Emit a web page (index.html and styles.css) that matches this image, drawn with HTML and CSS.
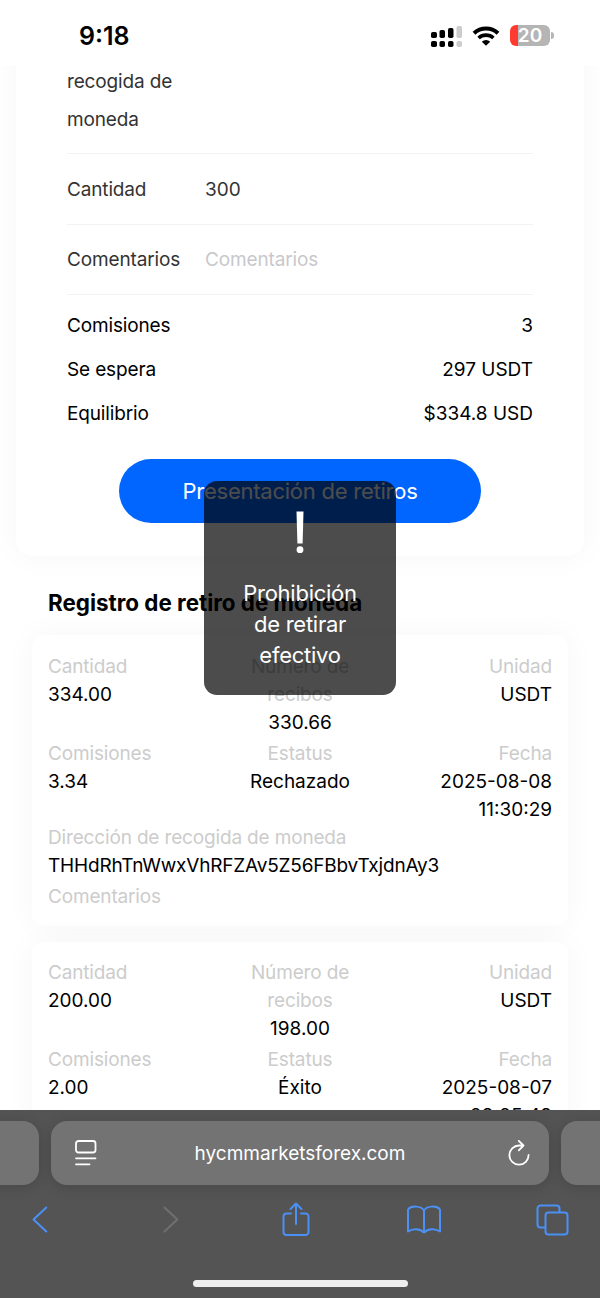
FILE: index.html
```html
<!DOCTYPE html>
<html lang="es">
<head>
    <meta charset="UTF-8">
    <meta name="viewport" content="width=device-width, initial-scale=1.0">
    <title>Registro de retiro de moneda</title>
    <link rel="stylesheet" href="styles.css">
</head>
<body>
    <div class="screen">
        <header class="status-bar">
            <span class="time">9:18</span>
            <div class="status-icons">
                <svg class="signal" width="32" height="22" viewBox="0 0 32 22">
                    <rect x="0" y="7" width="6" height="6" rx="1.8"/>
                    <rect x="8.5" y="5" width="5.5" height="8" rx="1.8"/>
                    <rect x="17" y="3" width="5.5" height="10" rx="1.8"/>
                    <rect x="25.5" y="1" width="5.5" height="12" rx="1.8" fill="#ccc"/>
                    <rect x="0" y="16" width="6" height="6" rx="1.8"/>
                    <rect x="8.5" y="16" width="5.5" height="6" rx="1.8"/>
                    <rect x="17" y="16" width="5.5" height="6" rx="1.8"/>
                    <rect x="25.5" y="16" width="5.5" height="6" rx="1.8" fill="#ccc"/>
                </svg>
                <svg class="wifi" width="28" height="20" viewBox="0 0 28 20">
                    <path d="M2 7.3A17.5 17.5 0 0 1 26 7.3" fill="none" stroke="#000" stroke-width="4"/>
                    <path d="M6.6 12A11 11 0 0 1 21.4 12" fill="none" stroke="#000" stroke-width="3.6"/>
                    <path d="M14 19.8L9.8 15.7A6 6 0 0 1 18.2 15.7Z"/>
                </svg>
                <div class="battery">
                    <span class="battery-body">20</span>
                    <span class="battery-tip"></span>
                </div>
            </div>
        </header>

        <main class="page">
            <section class="form-card">
                <div class="form-row">
                    <label class="form-label">recogida de moneda</label>
                </div>
                <div class="form-row">
                    <label class="form-label">Cantidad</label>
                    <span class="form-value">300</span>
                </div>
                <div class="form-row">
                    <label class="form-label">Comentarios</label>
                    <span class="form-value placeholder">Comentarios</span>
                </div>
                <div class="summary">
                    <div class="summary-row"><span>Comisiones</span><span>3</span></div>
                    <div class="summary-row"><span>Se espera</span><span>297 USDT</span></div>
                    <div class="summary-row"><span>Equilibrio</span><span>$334.8 USD</span></div>
                </div>
                <button class="submit-btn">Presentación de retiros</button>
            </section>

            <h2 class="record-title">Registro de retiro de moneda</h2>

            <section class="record">
                <div class="record-grid">
                    <div class="cell"><span class="name">Cantidad</span><span>334.00</span></div>
                    <div class="cell center"><span class="name">Número de recibos</span><span>330.66</span></div>
                    <div class="cell right"><span class="name">Unidad</span><span>USDT</span></div>
                    <div class="cell"><span class="name">Comisiones</span><span>3.34</span></div>
                    <div class="cell center"><span class="name">Estatus</span><span>Rechazado</span></div>
                    <div class="cell right"><span class="name">Fecha</span><span>2025-08-08 11:30:29</span></div>
                </div>
                <div class="cell address"><span class="name">Dirección de recogida de moneda</span><span>THHdRhTnWwxVhRFZAv5Z56FBbvTxjdnAy3</span></div>
                <div class="cell note"><span class="name">Comentarios</span></div>
            </section>

            <section class="record">
                <div class="record-grid">
                    <div class="cell"><span class="name">Cantidad</span><span>200.00</span></div>
                    <div class="cell center"><span class="name">Número de recibos</span><span>198.00</span></div>
                    <div class="cell right"><span class="name">Unidad</span><span>USDT</span></div>
                    <div class="cell"><span class="name">Comisiones</span><span>2.00</span></div>
                    <div class="cell center"><span class="name">Estatus</span><span>Éxito</span></div>
                    <div class="cell right"><span class="name">Fecha</span><span>2025-08-07 09:05:49</span></div>
                </div>
            </section>
        </main>

        <footer class="browser-bar">
            <div class="tabs">
                <div class="tab"></div>
                <div class="tab current">
                    <svg width="22" height="26" viewBox="0 0 22 26" fill="none" stroke="#fff" stroke-width="1.8" stroke-linecap="round">
                        <rect x="1" y="1" width="19.5" height="11.5" rx="2.5"/>
                        <path d="M1 18.3h19.5M1 24.3h13.5"/>
                    </svg>
                    <span class="url">hycmmarketsforex.com</span>
                    <svg width="22" height="26" viewBox="0 0 22 26" fill="none" stroke="#fff" stroke-width="1.8" stroke-linecap="round" stroke-linejoin="round">
                        <path d="M15.5 5.5H11A9.6 9.6 0 1 0 20.6 15M10.8 0.9L15.5 5.5L10.8 10.3"/>
                    </svg>
                </div>
                <div class="tab"></div>
            </div>
            <nav class="toolbar">
                <svg width="16" height="27" viewBox="0 0 16 27"><path d="M14.3 1.5L1.5 13.5L14.3 25.5"/></svg>
                <svg class="disabled" width="16" height="27" viewBox="0 0 16 27"><path d="M1.5 1.5L14.3 13.5L1.5 25.5"/></svg>
                <svg width="28" height="36" viewBox="0 0 28 36"><path d="M9 11.5H4.500A3 3 0 0 0 1.500 14.500V30A3 3 0 0 0 4.500 33H23.500A3 3 0 0 0 26.500 30V14.500A3 3 0 0 0 23.500 11.500H19M14 22V2M8.500 7L14 1.500L19.500 7"/></svg>
                <svg width="36" height="29" viewBox="0 0 36 29"><path d="M18 5.5C15.500 1 5.500 0 2 4.500V26.500C7 23 14 23.500 18 27.500C22 23.500 29 23 34 26.500V4.500C30.500 0 20.500 1 18 5.500V27"/></svg>
                <svg width="33" height="32" viewBox="0 0 33 32"><rect x="9.5" y="8.5" width="22" height="22" rx="3"/><path d="M9 23.500H4.500A3 3 0 0 1 1.500 20.500V4.500A3 3 0 0 1 4.500 1.500H20.500A3 3 0 0 1 23.500 4.500V8"/></svg>
            </nav>
            <div class="home-indicator"></div>
        </footer>

        <div class="toast">
            <svg width="12" height="44" viewBox="0 0 12 44" fill="#fff">
                <path d="M2.5 0.5H9.5L8.6 32.5H3.4Z"/>
                <circle cx="6" cy="38.7" r="3.4"/>
            </svg>
            <p>Prohibición de retirar efectivo</p>
        </div>
    </div>
</body>
</html>
```

FILE: styles.css
```css
* {
    margin: 0;
    padding: 0;
    box-sizing: border-box;
}

body {
    font-family: Inter, "Liberation Sans", sans-serif;
    font-size: 19px;
    color: #000;
    background: #fff;
}

.screen {
    position: relative;
    display: flex;
    flex-direction: column;
    width: 600px;
    height: 1298px;
    overflow: hidden;
}

/* status bar */
.status-bar {
    display: flex;
    justify-content: space-between;
    align-items: flex-start;
    flex: none;
    height: 66px;
    padding: 20px 46px 0 79px;
}

.time {
    font-size: 25px;
    font-weight: 600;
    line-height: 32px;
}

.status-icons {
    display: flex;
    align-items: center;
    height: 31px;
}

.wifi {
    margin: 0 10px 0 9px;
}

.battery {
    display: flex;
    align-items: center;
    gap: 1px;
}

.battery-body {
    width: 40px;
    height: 21px;
    border-radius: 6px;
    background: linear-gradient(90deg, #ff3b30 8px, #b5b5b5 8px);
    color: #fff;
    font-size: 19px;
    font-weight: 600;
    line-height: 21px;
    text-align: center;
}

.battery-tip {
    width: 3px;
    height: 7px;
    border-radius: 0 3px 3px 0;
    background: #b5b5b5;
}

/* page */
.page {
    display: flex;
    flex-direction: column;
    flex: 1;
    min-height: 0;
    overflow: hidden;
}

.form-card {
    flex: none;
    margin: -60px 16px 0;
    padding: 60px 51px 33px;
    border-radius: 16px;
    box-shadow: 0 0 32px rgba(0, 0, 0, 0.04);
}

.form-row {
    display: flex;
    padding: 16px 0 15px;
    border-bottom: 1px solid #f3f3f3;
    color: #333;
    line-height: 39px;
}

.form-row:first-child {
    margin-top: -3px;
    padding: 0 0 14px;
    line-height: 38px;
}

.form-row:nth-child(3) {
    padding: 15px 0;
}

.form-label {
    flex: none;
    width: 138px;
    padding-right: 20px;
    letter-spacing: -0.15px;
}

.placeholder {
    color: #c8c8cc;
    letter-spacing: -0.15px;
}

.summary {
    padding: 9px 0 23px;
}

.summary-row {
    display: flex;
    justify-content: space-between;
    line-height: 44px;
}

.summary-row span:first-child {
    letter-spacing: -0.15px;
}

.submit-btn {
    display: block;
    width: 362px;
    height: 64px;
    margin: 0 auto;
    padding-bottom: 1px;
    border: none;
    border-radius: 32px;
    background: #0066ff;
    color: #fff;
    font-family: inherit;
    font-size: 22px;
    letter-spacing: -0.24px;
}

.record-title {
    flex: none;
    padding: 31px 48px 17px;
    font-size: 22.4px;
    font-weight: 700;
    line-height: 31px;
}

.record {
    flex: none;
    margin: 0 32px 16px;
    padding: 17px 16px 15px;
    border-radius: 12px;
    background: #fff;
    box-shadow: 0 0 32px rgba(0, 0, 0, 0.04);
    line-height: 28px;
}

.record-title + .record {
    padding-top: 18px;
}

.record-grid {
    display: grid;
    grid-template-columns: repeat(3, 120px);
    justify-content: space-between;
    row-gap: 3px;
}

.cell span {
    display: block;
}

.cell .name {
    color: #ccc;
    letter-spacing: -0.16px;
}

.address {
    letter-spacing: -0.19px;
}

.center {
    text-align: center;
}

.right {
    text-align: right;
}

.note {
    margin-top: 3px;
}

/* browser chrome */
.browser-bar {
    flex: none;
    height: 188px;
    padding-top: 11px;
    background: #545454;
}

.tabs {
    display: flex;
    gap: 12px;
    width: 700px;
    margin-left: -51px;
}

.tab {
    flex: none;
    width: 90px;
    height: 64px;
    border-radius: 16px;
    background: #737373;
    box-shadow: 0 2px 14px rgba(0, 0, 0, 0.16);
}

.current {
    display: flex;
    align-items: center;
    justify-content: space-between;
    width: 498px;
    padding: 0 19px 0 24px;
    color: #fff;
}

.url {
    margin-right: 5px;
}

.toolbar {
    display: grid;
    grid-template-columns: repeat(5, 128px);
    align-items: center;
    justify-items: center;
    height: 69px;
    margin-left: -24px;
    fill: none;
    stroke: #4a90f5;
    stroke-width: 2;
    stroke-linecap: round;
    stroke-linejoin: round;
}

.disabled {
    margin-left: 6px;
    stroke: #707070;
}

.home-indicator {
    width: 215px;
    height: 7px;
    margin: 26px auto 0;
    border-radius: 4px;
    background: #eee;
}

/* toast over the page */
.toast {
    position: absolute;
    top: 481px;
    left: 204px;
    width: 192px;
    height: 214px;
    padding: 30px 32px 0;
    border-radius: 13px;
    background: rgba(0, 0, 0, 0.7);
    color: #fff;
    font-size: 22px;
    line-height: 31px;
    letter-spacing: -0.25px;
    text-align: center;
}

.toast svg {
    display: block;
    margin: 0 auto 23px;
}
```
